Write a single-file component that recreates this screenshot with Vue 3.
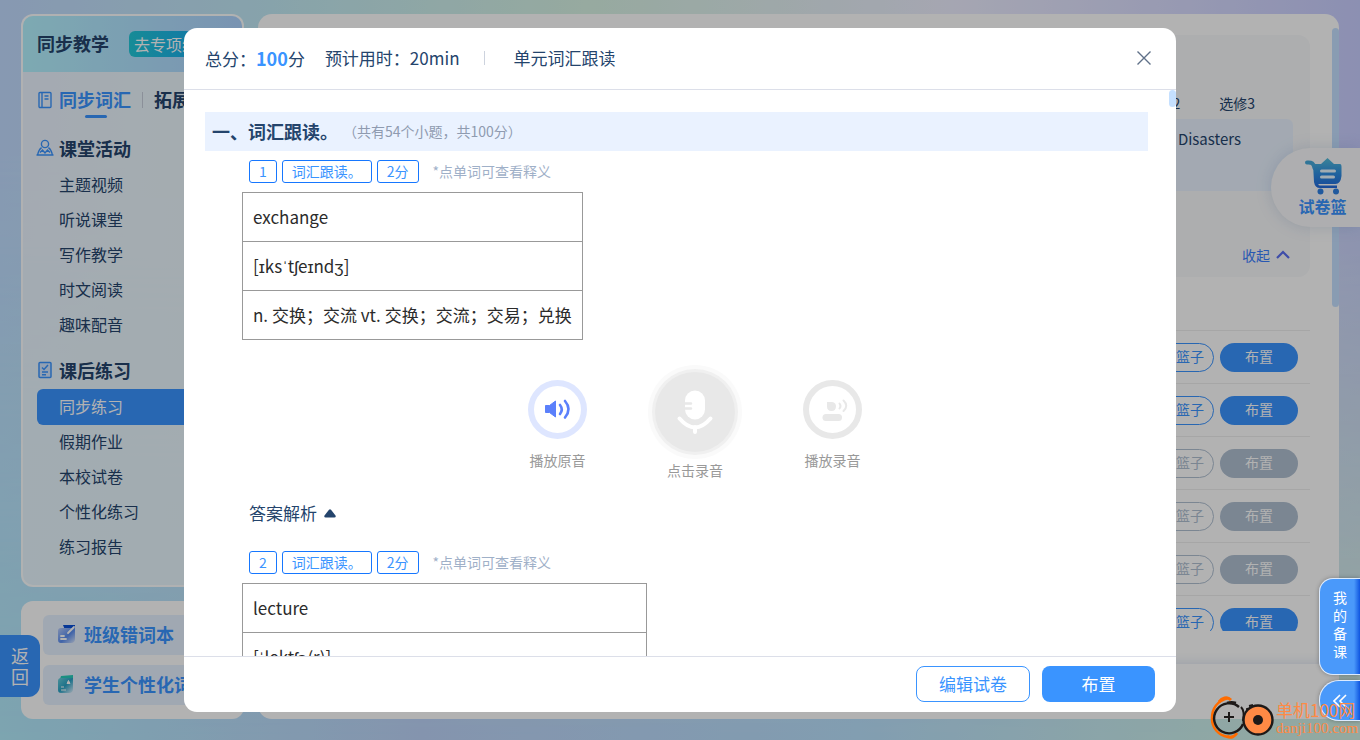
<script setup>
const lessonItems = ['主题视频', '听说课堂', '写作教学', '时文阅读', '趣味配音']
const practiceItems = ['同步练习', '假期作业', '本校试卷', '个性化练习', '练习报告']
const paperRows = [true, true, false, false, false, true]
const questions = [
  { no: 1, rows: ['exchange', '[ɪksˈtʃeɪndʒ]', 'n. 交换；交流 vt. 交换；交流；交易；兑换'] },
  { no: 2, rows: ['lecture', '[ˈlektʃə(r)]', 'n. 讲座；讲课；教训 vi. 开讲座；讲课；训斥 (他人)'] }
]
</script>

<template>
  <div class="page">
    <aside class="side">
      <nav class="card nav-card">
        <div class="nav-head">
          <h1>同步教学</h1>
          <button class="special" type="button">去专项练习</button>
        </div>
        <div class="tabs">
          <svg class="tab-icon" viewBox="0 0 16 18" fill="none" stroke="currentColor" stroke-width="1.4">
            <rect x="2" y="1.5" width="12" height="15" rx="1" />
            <path d="M5 1.5v15M7.5 5h4M7.5 8h4" />
          </svg>
          <button class="tab active" type="button">同步词汇</button>
          <span class="tab-line"></span>
          <button class="tab" type="button">拓展</button>
        </div>
        <h2>
          <svg viewBox="0 0 18 18" fill="none" stroke="currentColor" stroke-width="1.4">
            <circle cx="9" cy="5" r="3.6" />
            <path d="M5.6 8.6C3.6 10 2.2 12.500 1.600 16M12.400 8.600C14.400 10 15.800 12.500 16.400 16M.5 16h17M4 13.500l2.500-2.500L9 14l2.500-3 2.500 2.500" />
          </svg>课堂活动
        </h2>
        <ul>
          <li v-for="item in lessonItems" :key="item"><a href="#">{{ item }}</a></li>
        </ul>
        <h2 class="second">
          <svg viewBox="0 0 18 18" fill="none" stroke="currentColor" stroke-width="1.5">
            <rect x="3" y="1.500" width="12" height="15" rx="1" fill="#d3e6ff" />
            <path d="M6 6.500l2 2 4-4.500M6 11h6M6 13.800h4" />
          </svg>课后练习
        </h2>
        <ul>
          <li v-for="(item, i) in practiceItems" :key="item">
            <a href="#" :class="{ current: i === 0 }">{{ item }}</a>
          </li>
        </ul>
      </nav>
      <section class="card books">
        <a href="#">
          <svg viewBox="0 0 20 20">
            <defs>
              <linearGradient id="bookA" x1="0" y1="0" x2="1" y2="1">
                <stop offset="0" stop-color="#b9cdfb" /><stop offset=".55" stop-color="#5c8ff2" /><stop offset="1" stop-color="#dbe8ff" />
              </linearGradient>
            </defs>
            <path d="M6 1h12v4L8 6z" fill="#0a50d8" />
            <path d="M4 4h14v11a4 4 0 0 1-4 4H4a3 3 0 0 1-3-3V7a3 3 0 0 1 3-3z" fill="url(#bookA)" />
            <path d="M11 9l6-6M4 12h3M4 15h5" stroke="#fff" stroke-width="1.800" stroke-linecap="round" />
          </svg>班级错词本
        </a>
        <a href="#">
          <svg viewBox="0 0 20 20">
            <defs>
              <linearGradient id="bookB" x1="0" y1="0" x2="1" y2="1">
                <stop offset="0" stop-color="#6bd0dc" /><stop offset=".5" stop-color="#2aa3c6" /><stop offset="1" stop-color="#e0f0ff" />
              </linearGradient>
            </defs>
            <path d="M4 2l12-1v4H3z" fill="#27cdbb" />
            <path d="M4 4h12v11a4 4 0 0 1-4 4H4a3 3 0 0 1-3-3V7a3 3 0 0 1 3-3z" fill="url(#bookB)" />
            <path d="M10 9.500l1.500-3 1.500 3zM4 13h3M4 16h5" fill="#fff" stroke="#fff" />
          </svg>学生个性化词本
        </a>
      </section>
    </aside>

    <main class="main">
      <div class="scroll">
        <div class="filter">
          <div class="books-line"><span>选修2</span><span>选修3</span></div>
          <div class="units">Disasters</div>
          <button class="fold" type="button">
            收起
            <svg viewBox="0 0 14 10" fill="none" stroke="#5a6ff2" stroke-width="2.200"><path d="M1 8l6-6 6 6" /></svg>
          </button>
        </div>
        <div class="papers">
          <div v-for="(on, i) in paperRows" :key="i" class="paper" :class="{ off: !on }">
            <button class="add" type="button">加入篮子</button>
            <button class="assign" type="button">布置</button>
          </div>
        </div>
      </div>
      <span class="page-thumb"></span>
      <div class="main-foot"></div>
    </main>

    <button class="back" type="button">返回</button>
    <button class="basket" type="button">
      <svg viewBox="0 0 38 38">
        <defs>
          <linearGradient id="cart" x1="0" y1="0" x2="0" y2="1">
            <stop offset="0" stop-color="#55bdda" /><stop offset=".5" stop-color="#2f90e2" /><stop offset="1" stop-color="#2268dc" />
          </linearGradient>
        </defs>
        <path d="M3 5.500C8 5 9.500 6.500 10.500 11" fill="none" stroke="#46a8da" stroke-width="4" stroke-linecap="round" />
        <path d="M9 7h8l6.500-6L30 7h6q1.500 0 1.500 3v9q-1 8-6 8H15c-1 0-1 1.500 1 1.500h17V31H16q-5 0-6-6z" fill="url(#cart)" />
        <path d="M17.500 14h13M17.500 20h12" stroke="#e9f6ff" stroke-width="3" stroke-linecap="round" />
        <circle cx="16.500" cy="34.500" r="3" fill="#2f80e2" /><circle cx="32" cy="34.500" r="3" fill="#2f80e2" />
      </svg>
      <span>试卷篮</span>
    </button>

    <div class="overlay">
      <section class="modal" role="dialog" aria-label="单元词汇跟读">
        <header>
          <span>总分：<b>100</b>分</span>
          <span class="time">预计用时：20min</span>
          <span class="bar"></span>
          <span>单元词汇跟读</span>
          <button class="close" type="button" aria-label="关闭">
            <svg viewBox="0 0 14 14" stroke="#5f7088" stroke-width="1.400"><path d="M.5.500l13 13M13.500.500l-13 13" /></svg>
          </button>
        </header>
        <div class="body">
          <div class="section-title"><h3>一、词汇跟读。</h3><span>（共有54个小题，共100分）</span></div>
          <article v-for="q in questions" :key="q.no">
            <div class="tags">
              <span class="tag">{{ q.no }}</span>
              <span class="tag">词汇跟读。</span>
              <span class="tag">2分</span>
              <small>*点单词可查看释义</small>
            </div>
            <table>
              <tbody>
                <tr v-for="row in q.rows" :key="row"><td>{{ row }}</td></tr>
              </tbody>
            </table>
            <div class="audio">
              <button class="play" type="button">
                <svg viewBox="0 0 59 59">
                  <circle cx="29.500" cy="29.500" r="26.500" fill="#fff" stroke="#dee6ff" stroke-width="6" />
                  <path d="M17.500 25.500h4l6-4.500v16l-6-4.500h-4z" fill="#5b80fb" stroke="#5b80fb" stroke-linejoin="round" />
                  <path d="M32 25q3.500 4.500 0 9M37 21q7 8 0 16.500" fill="none" stroke="#5b80fb" stroke-width="2.600" stroke-linecap="round" />
                </svg>
                <span>播放原音</span>
              </button>
              <button class="record" type="button">
                <svg viewBox="0 0 94 94">
                  <circle cx="47" cy="47" r="47" fill="#fafafa" />
                  <circle cx="47" cy="47" r="43" fill="#f0f0f0" />
                  <circle cx="47" cy="47" r="40" fill="#e8e8e8" />
                  <rect x="37" y="25.500" width="20" height="29" rx="10" fill="#fff" />
                  <path d="M37 38.500h6M37 43.500h6" stroke="#e8e8e8" stroke-width="2.500" stroke-linecap="round" />
                  <path d="M31.500 53.500q15.500 18 31 0M47 62v5" fill="none" stroke="#fff" stroke-width="4" stroke-linecap="round" />
                </svg>
                <span>点击录音</span>
              </button>
              <button class="play" type="button">
                <svg viewBox="0 0 59 59">
                  <circle cx="29.500" cy="29.500" r="26.500" fill="#fff" stroke="#e8e8e8" stroke-width="6" />
                  <path d="M24 22h5a4.500 4.500 0 1 1-5 4.500z" fill="#e8e8e8" />
                  <rect x="19.500" y="34" width="19.500" height="7" rx="3.500" fill="#e8e8e8" />
                  <path d="M36.500 23.500q2 2.500 0 5M40.500 20.500q5.500 5 0 10.500" fill="none" stroke="#e8e8e8" stroke-width="2" stroke-linecap="round" />
                </svg>
                <span>播放录音</span>
              </button>
            </div>
            <button class="answer" type="button">
              答案解析
              <svg viewBox="0 0 12 9"><path d="M5 .8q1-1 2 0l4.500 5.700q.8 2-1.200 2H1.700q-2 0-1.200-2z" fill="#24446c" /></svg>
            </button>
          </article>
          <span class="modal-thumb"></span>
        </div>
        <footer>
          <button class="edit" type="button">编辑试卷</button>
          <button class="submit" type="button">布置</button>
        </footer>
      </section>
    </div>

    <div class="dock">
      <button class="prep" type="button">我的备课</button>
      <button class="expand" type="button" aria-label="展开">
        <svg viewBox="0 0 14 14" fill="none" stroke="#fff" stroke-width="1.600"><path d="M7 1L1 7l6 6M13 1L7 7l6 6" /></svg>
      </button>
    </div>
    <div class="mark">
      <svg viewBox="0 0 64 44" fill="none">
        <path d="M18 2C7 5 2 13 2 22c0 10 6 17 16 19" stroke="#ff6c00" stroke-width="2.600" />
        <path d="M9 6c3-4 8-6 12-2M17 40c4 3 8 0 10-3" stroke="#ff6c00" stroke-width="3" />
        <path d="M29 11A15 15 0 1 0 33 28M26 7a15 15 0 0 0-9 0" stroke="#1d1918" stroke-width="2.400" />
        <path d="M19 16v10M14 21h10M31 11q4 4 2 14M37 12q1 4-1 8M39 10l4-1" stroke="#1d1918" stroke-width="2" />
        <circle cx="48" cy="24" r="14.500" fill="#ff8a45" stroke="#1d1918" stroke-width="2.400" />
        <circle cx="48" cy="24" r="5" fill="#1d1918" />
      </svg>
      <div><strong>单机100网</strong><span>danji100.com</span></div>
    </div>
  </div>
</template>

<style>
html, body { overflow: hidden; }
</style>

<style scoped>
* { box-sizing: border-box; }
.page {
  position: relative;
  display: flex;
  gap: 14px;
  height: 100vh;
  padding: 14px 21px 21px;
  overflow: hidden;
  color: #24446c;
  font-family: "Noto Sans CJK SC", "Open Sans", sans-serif;
  font-size: 16px;
  background: linear-gradient(90deg, #b3ecfd, #bed5fa 31%, #bae2fe 63%, #ccf0ed 88%, #d5f3e5);
}
.page::before {
  content: "";
  position: absolute;
  inset: 0;
  background: linear-gradient(90deg, #c2dbff, #c2eaf5 20%, #d8f4e5 43%, #edeeff 70%, #c9ceff);
  mask-image: linear-gradient(#000 20%, transparent);
}
h1, h2, h3, ul { margin: 0; padding: 0; }
ul { list-style: none; }
a { color: inherit; text-decoration: none; }
button { margin: 0; padding: 0; border: 0; background: none; color: inherit; font: inherit; cursor: pointer; }
svg { display: block; flex: none; }

.side { position: relative; display: flex; flex-direction: column; gap: 14px; flex: 0 0 223px; }
.card { border-radius: 12px; overflow: hidden; }
.nav-card { flex: 1; min-height: 0; border: 2px solid rgba(255, 255, 255, .9); background: rgba(255, 255, 255, .68); }
.nav-head {
  display: flex;
  align-items: center;
  gap: 20px;
  height: 56px;
  padding: 0 14px;
  background: linear-gradient(90deg, #b4f3ff, #aed4ff);
}
.nav-head h1 { flex: none; padding-bottom: 2px; font-size: 18px; line-height: 26px; }
.special { flex: none; height: 26px; padding: 0 5px; border-radius: 6px; color: #fff; line-height: 24px; background: linear-gradient(90deg, #21c8d8, #1aa5f5); }
.tabs { display: flex; align-items: center; height: 56px; padding-left: 14px; }
.tab-icon { width: 16px; height: 18px; margin-right: 6px; color: #3a94ff; }
.tab { position: relative; flex: none; padding-bottom: 2px; font-size: 18px; font-weight: 700; line-height: 26px; }
.tab.active { color: #3a94ff; }
.tab.active::after { content: ""; position: absolute; left: 26px; bottom: -4px; width: 22px; height: 3px; border-radius: 2px; background: #3a94ff; }
.tab-line { width: 1px; height: 16px; margin: 0 11px; background: #c8cedb; }
h2 { display: flex; align-items: center; gap: 5px; height: 40px; padding-left: 13px; font-size: 18px; }
h2 svg { width: 18px; height: 18px; color: #3a94ff; }
h2.second { height: 38px; margin-top: 8px; }
li a { display: block; height: 35px; margin-left: 14px; padding-left: 22px; border-radius: 6px 0 0 6px; line-height: 33px; }
li a.current { height: 36px; background: #3a94ff; color: #fff; line-height: 34px; }
.books { display: flex; flex-direction: column; gap: 10px; padding: 14px 0 14px 22px; background: #fff; }
.books a { display: flex; align-items: center; gap: 7px; height: 40px; padding: 0 0 2px 14px; border-radius: 6px; background: #e6f1ff; color: #3a94ff; font-size: 18px; font-weight: 700; white-space: nowrap; }
.books svg { width: 20px; height: 20px; }

.main { position: relative; display: flex; flex-direction: column; flex: 1; min-width: 0; border-radius: 14px; background: #fff; overflow: hidden; }
.scroll { flex: 1; min-height: 0; margin-bottom: 33px; padding: 21px 29px 0; overflow: hidden; }
.filter { display: flex; flex-direction: column; height: 242px; padding: 58px 17px 10px 20px; border-radius: 12px; background: #f8f9fb; font-size: 14px; }
.books-line { display: flex; justify-content: flex-end; gap: 39px; height: 26px; padding-right: 38px; line-height: 20px; }
.units { height: 72px; padding-right: 52px; border-radius: 6px; background: #eaf3ff; font-size: 15px; line-height: 40px; text-align: right; }
.fold { display: flex; align-items: center; align-self: flex-end; gap: 6px; margin: auto 3px 0 0; color: #3a7fff; line-height: 24px; }
.fold svg { width: 14px; height: 10px; }
.papers { margin-top: 53px; }
.paper { display: flex; align-items: center; justify-content: flex-end; gap: 6px; height: 53px; padding-right: 12px; border-top: 1px solid #eee; font-size: 14px; }
.paper button { height: 29px; border-radius: 15px; padding-bottom: 2px; }
.paper .add { padding: 0 9px 2px; border: 1px solid #3a94ff; color: #3a94ff; }
.assign { width: 78px; background: #3a94ff; color: #fff; }
.paper.off .add { border-color: #b0c0d2; color: #b0c0d2; }
.off .assign { background: #b0c0d2; }
.page-thumb { position: absolute; top: 14px; right: 0; width: 7px; height: 279px; border-radius: 4px; background: #c5e0ff; }
.main-foot { height: 55px; box-shadow: 0 -3px 8px rgba(90, 130, 190, .15); }

.back { position: absolute; left: 0; bottom: 43px; width: 40px; height: 62px; padding: 0 10px; border-radius: 0 12px 12px 0; background: #3a94ff; color: #fff; font-size: 18px; line-height: 21px; }
.basket {
  position: absolute;
  top: 148px;
  right: 0;
  display: flex;
  flex-direction: column;
  align-items: center;
  width: 89px;
  height: 79px;
  padding: 9px 0 0 14px;
  border-radius: 40px 0 0 40px;
  background: #fafafc;
  box-shadow: 0 0 16px rgba(80, 120, 170, .2);
  color: #3a94ff;
  font-weight: 700;
  line-height: 22px;
}
.basket svg { width: 38px; height: 38px; }

.overlay { position: absolute; inset: 0; display: flex; padding: 28px 184px; background: rgba(0, 0, 0, .3); }
.modal { display: flex; flex-direction: column; flex: 1; min-width: 0; border-radius: 13px; background: #fff; overflow: hidden; }
header { display: flex; align-items: center; height: 62px; padding: 0 25px 2px 21px; border-bottom: 1px solid #dcdfe9; font-size: 17px; }
header b { color: #3a94ff; font-size: 18px; }
.time { margin-left: 20px; }
.bar { width: 1px; height: 14px; margin: 0 29px 0 24px; background: #cdd3de; }
.close { margin-left: auto; }
.close svg { width: 14px; height: 14px; }
.body { position: relative; flex: 1; min-height: 0; padding: 22px 28px 0 21px; overflow: hidden; }
.modal-thumb { position: absolute; top: 0; right: 0; width: 7px; height: 17px; border-radius: 4px; background: #c5e0ff; }
.section-title { display: flex; align-items: center; height: 39px; padding: 0 0 2px 7px; background: #eaf2ff; }
.section-title h3 { font-size: 18px; }
.section-title span { margin-left: 5px; color: #8f9bb0; font-size: 14px; }
article { height: 391px; padding-left: 37px; }
.tags { display: flex; align-items: center; gap: 5px; height: 41px; padding-left: 7px; }
.tag { height: 23px; padding: 0 9px; border: 1px solid #1677ff; border-radius: 3px; color: #3a94ff; font-size: 14px; line-height: 21px; }
.tags small { margin-left: 9px; padding-bottom: 2px; color: #9fb0c8; font-size: 14px; }
table { border-collapse: collapse; color: #2b2b2b; font-size: 17px; }
td { height: 49px; padding: 0 10px 2px; border: 1px solid #999; white-space: nowrap; }
.audio { display: flex; justify-content: center; align-items: flex-start; gap: 61px; height: 154px; padding-top: 25px; }
.audio button { display: flex; flex-direction: column; align-items: center; color: #999; font-size: 14px; line-height: 20px; white-space: nowrap; }
.play { gap: 11px; margin-top: 15px; }
.play svg { width: 59px; height: 59px; }
.record { gap: 1px; }
.record svg { width: 94px; height: 94px; }
.answer { display: flex; align-items: center; gap: 7px; margin-left: 7px; font-size: 17px; line-height: 38px; }
.answer svg { width: 12px; height: 9px; }
footer { display: flex; align-items: center; justify-content: flex-end; gap: 12px; height: 56px; padding: 0 21px 2px; border-top: 1px solid #dcdfe9; font-size: 17px; }
footer button { height: 36px; border-radius: 8px; }
.edit { width: 114px; border: 1px solid #3a94ff; color: #3a94ff; }
.submit { width: 113px; background: #3a94ff; color: #fff; }

.dock { position: absolute; right: 0; bottom: 19px; display: flex; flex-direction: column; gap: 5px; width: 41px; }
.dock button { border: 1px solid #dcebff; border-right: 0; background: linear-gradient(90deg, #4a99fa 85%, #0f55e0); color: #fff; font-size: 14px; line-height: 18px; box-shadow: 0 0 4px rgba(0, 0, 0, .3); }
.prep { height: 97px; padding: 0 13px 5px 12px; border-radius: 14px 0 0 14px; }
.dock .prep { padding: 0 12px 6px; }
.expand { height: 41px; border-radius: 20px 0 0 20px; }
.dock .expand { padding-left: 13px; }
.expand svg { width: 14px; height: 14px; }
.mark { position: absolute; right: 2px; bottom: 0; display: flex; align-items: center; gap: 2px; color: #ff8a45; }
.mark svg { width: 64px; height: 44px; }
.mark div { display: flex; flex-direction: column; width: 82px; white-space: nowrap; }
.mark strong { font-size: 17px; font-weight: 400; line-height: 20px; }
.mark span { font-family: "Liberation Serif", serif; font-size: 15px; line-height: 17px; }
</style>
